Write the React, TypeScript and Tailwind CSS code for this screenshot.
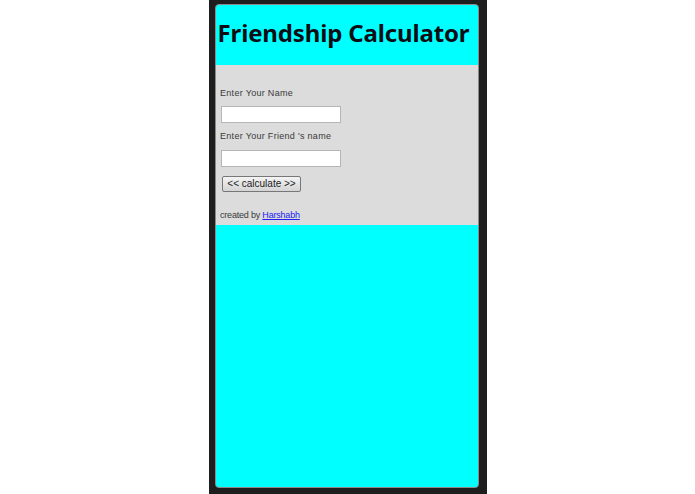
import React from "react";

export default function App() {
  return (
    <div className="w-[695px] h-[494px] bg-white flex justify-center">
      {/* phone frame */}
      <div className="w-[278px] h-[494px] bg-[#1e1e1e] ml-[1px] pt-[4px] pl-[6px]">
        <div className="w-[264px] h-[484px] rounded-[4px] border border-[#8a8a8a] bg-[#00ffff] overflow-hidden flex flex-col">
          <div className="h-[60px] flex items-center justify-center pr-[7px]">
            <h1 className="font-['Noto_Sans',sans-serif] font-bold text-[24px] tracking-[-0.15px] whitespace-nowrap text-[#0d0d14] leading-none pb-[4px]">
              Friendship Calculator
            </h1>
          </div>
          <div className="bg-[#dcdcdc] h-[160px] pl-[4px] pt-[23px] font-['Liberation_Sans',Arial,sans-serif] text-[#3a3a3a]">
            <p className="text-[9px] tracking-[0.3px] leading-[11px]">Enter Your Name</p>
            <input
              type="text"
              className="block mt-[7px] ml-[1px] w-[120px] h-[17px] bg-white border border-[#b5b5b5]"
            />
            <p className="text-[9px] tracking-[0.3px] leading-[11px] mt-[8px]">
              Enter Your Friend &apos;s name
            </p>
            <input
              type="text"
              className="block mt-[8px] ml-[1px] w-[120px] h-[17px] bg-white border border-[#b5b5b5]"
            />
            <button className="block mt-[9px] ml-[2px] w-[79px] h-[16px] border border-[#777] rounded-[2px] bg-gradient-to-b from-[#f4f4f4] to-[#d4d4d4] text-[10px] leading-none text-[#222]">
              &lt;&lt; calculate &gt;&gt;
            </button>
            <p className="text-[9px] mt-[18px] leading-[11px] tracking-[-0.2px]">
              created by{" "}
              <a href="#" className="text-[#2222ee] underline">
                Harshabh
              </a>
            </p>
          </div>
          <div className="flex-1" />
        </div>
      </div>
    </div>
  );
}
